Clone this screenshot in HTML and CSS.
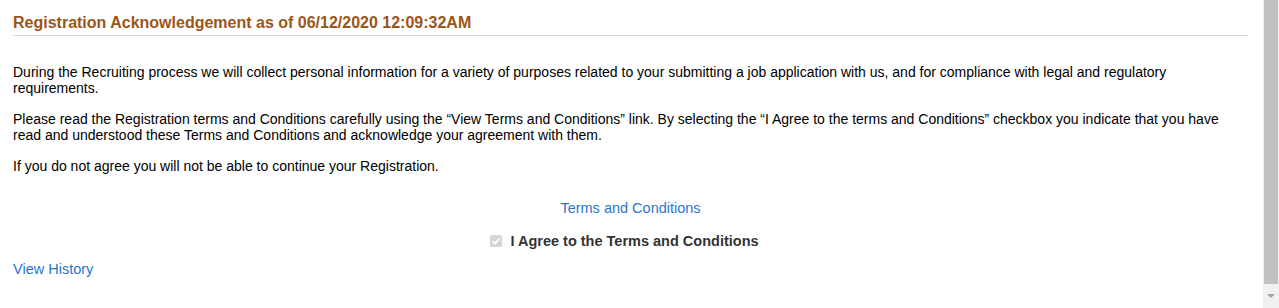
FILE: index.html
```html
<!DOCTYPE html>
<html>
<head>
<meta charset="utf-8">
<link rel="stylesheet" href="styles.css">
</head>
<body>
<div class="page">
  <main class="content">
    <h1 class="title">Registration Acknowledgement as of 06/12/2020 12:09:32AM</h1>
    <div class="text">
      <p>During the Recruiting process we will collect personal information for a variety of purposes related to your submitting a job application with us, and for compliance with legal and regulatory requirements.</p>
      <p>Please read the Registration terms and Conditions carefully using the “View Terms and Conditions” link. By selecting the “I Agree to the terms and Conditions” checkbox you indicate that you have read and understood these Terms and Conditions and acknowledge your agreement with them.</p>
      <p>If you do not agree you will not be able to continue your Registration.</p>
    </div>
    <div class="terms"><a class="link" href="#">Terms and Conditions</a></div>
    <div class="agree">
      <span class="checkbox"><svg width="10" height="10" viewBox="0 0 10 10"><path d="M1.5 5.2 L4 7.6 L8.6 2.4" fill="none" stroke="#fff" stroke-width="1.6"/></svg></span>
      <span class="agree-label">I Agree to the Terms and Conditions</span>
    </div>
    <div class="history"><a class="link" href="#">View History</a></div>
  </main>
  <div class="scrollbar">
    <div class="thumb"></div>
    <div class="arrow"><span class="tri"></span></div>
  </div>
</div>
</body>
</html>
```
FILE: styles.css
```css
html, body { margin: 0; padding: 0; background: #fff; }
body { font-family: "Liberation Sans", Arial, sans-serif; }
.page { display: flex; height: 308px; overflow: hidden; }
.content { flex: 1; padding: 0 15px 0 13px; }
.title {
  margin: 0; padding: 14px 0 3px 0;
  font-size: 16px; line-height: 18px; font-weight: bold;
  color: #9c5517;
  border-bottom: 1px solid #d9d9d9;
}
.text { padding-top: 28px; font-size: 14px; line-height: 16px; color: #000; }
.text p { margin: 0 0 15px 0; }
.text p:last-child { margin-bottom: 0; }
.terms { text-align: center; font-size: 14.5px; line-height: 18px; margin-top: 25px; }
.link { color: #2a76cc; text-decoration: none; }
.agree { display: flex; justify-content: center; align-items: center; gap: 8px; margin-top: 15px; padding-right: 12px; }
.checkbox {
  width: 12px; height: 12px; background: #d6d6d6; border-radius: 2px;
  display: flex; align-items: center; justify-content: center;
}
.agree-label { font-size: 14.5px; line-height: 18px; font-weight: bold; color: #333; }
.history { font-size: 14.5px; line-height: 18px; margin-top: 10px; }
.scrollbar { width: 16px; background: #f1f1f1; display: flex; flex-direction: column; }
.thumb { flex: 1; margin: 0 1px 0 1px; background: #c1c1c1; }
.arrow { height: 24px; display: flex; justify-content: center; align-items: center; }
.tri { width: 0; height: 0; border-left: 4px solid transparent; border-right: 4px solid transparent; border-top: 4px solid #a3a3a3; }
```
